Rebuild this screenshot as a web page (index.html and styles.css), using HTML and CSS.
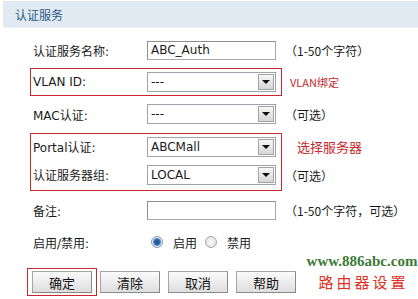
FILE: index.html
```html
<!DOCTYPE html>
<html>
<head>
<meta charset="utf-8">
<link rel="stylesheet" href="styles.css">
</head>
<body>
<div class="header">认证服务</div>
<div class="form">
  <div class="row">
    <div class="cell"><span class="label">认证服务名称:</span><span class="input">ABC_Auth</span></div>
    <span class="hint">（1-50个字符）</span>
  </div>
  <div class="row">
    <div class="cell boxed"><span class="label">VLAN ID:</span><span class="select">---<i class="arrow"></i></span></div>
    <span class="note note-vlan">VLAN绑定</span>
  </div>
  <div class="row">
    <div class="cell"><span class="label">MAC认证:</span><span class="select">---<i class="arrow"></i></span></div>
    <span class="hint">（可选）</span>
  </div>
  <div class="group">
    <div class="groupbox">
      <div class="grow g1"><span class="label">Portal认证:</span><span class="select">ABCMall<i class="arrow"></i></span></div>
      <div class="grow g2"><span class="label">认证服务器组:</span><span class="select">LOCAL<i class="arrow"></i></span></div>
    </div>
    <div class="ghints">
      <div class="grow g1"><span class="note note-srv">选择服务器</span></div>
      <div class="grow g2"><span class="hint">（可选）</span></div>
    </div>
  </div>
  <div class="row">
    <div class="cell"><span class="label">备注:</span><span class="input"></span></div>
    <span class="hint">（1-50个字符，可选）</span>
  </div>
  <div class="row">
    <div class="cell"><span class="label">启用/禁用:</span>
      <span class="radios"><i class="radio on"></i><span class="rtext">启用</span><i class="radio"></i><span class="rtext">禁用</span></span>
    </div>
  </div>
  <div class="buttons">
    <span class="btnbox"><span class="btn">确定</span></span>
    <span class="btn">清除</span>
    <span class="btn">取消</span>
    <span class="btn">帮助</span>
  </div>
</div>
<div class="mark">
  <div class="mark-url">www.886abc.com</div>
  <div class="mark-cn">路由器设置</div>
</div>
</body>
</html>
```
FILE: styles.css
```css
html, body {
  margin: 0;
  padding: 0;
  background: #fff;
}
body {
  width: 418px;
  height: 299px;
  overflow: hidden;
  position: relative;
  font-family: "DejaVu Sans", "Noto Sans CJK SC", sans-serif;
  font-size: 12px;
  color: #1a1a1a;
}
.header {
  margin: 1px 0 0 3px;
  height: 26px;
  line-height: 27px;
  background: #e1eaf2;
  border-bottom: 1px solid #ebf1f6;
  padding-left: 12px;
  color: #2b5a86;
  font-family: "Noto Sans CJK SC", sans-serif;
  font-size: 12px;
}
.form {
  padding-left: 30px;
  padding-top: 6px;
}
.row {
  display: flex;
  align-items: center;
  height: 32px;
}
.cell {
  display: flex;
  align-items: center;
  width: 252px;
  height: 28px;
  box-sizing: border-box;
  padding-left: 2px;
  border: 1px solid transparent;
}
.boxed {
  border-color: #c8282e;
}
.label {
  width: 114px;
  flex: none;
  white-space: nowrap;
}
.input, .select {
  position: relative;
  display: block;
  width: 129px;
  height: 19px;
  box-sizing: border-box;
  border: 1px solid #a9a9a9;
  border-top-color: #8f8f8f;
  border-left-color: #8f8f8f;
  background: #fff;
  padding-left: 3px;
  line-height: 17px;
  font-size: 12px;
}
.select {
  height: 20px;
  line-height: 18px;
  border-color: #9ea3aa;
}
.arrow {
  position: absolute;
  right: 1px;
  top: 1px;
  width: 16px;
  height: 16px;
  box-sizing: border-box;
  border: 1px solid #a3a3a3;
  background: linear-gradient(#f7f7f7, #d6d6d6);
}
.arrow::after {
  content: "";
  position: absolute;
  left: 3px;
  top: 5px;
  border-left: 4px solid transparent;
  border-right: 4px solid transparent;
  border-top: 4px solid #111;
}
.hint {
  margin-left: 3px;
  font-family: "Noto Sans CJK SC", sans-serif;
  white-space: nowrap;
}
.note {
  color: #c8282e;
  font-family: "Noto Sans CJK SC", sans-serif;
  white-space: nowrap;
}
.note-vlan {
  margin-left: 8px;
  font-size: 11px;
}
.note-srv {
  margin-left: 15px;
  font-size: 13px;
}
.group {
  display: flex;
  align-items: center;
  height: 64px;
}
.groupbox {
  width: 252px;
  box-sizing: border-box;
  border: 1px solid #c8282e;
  padding-left: 2px;
}
.grow {
  display: flex;
  align-items: center;
}
.g1 { height: 25px; }
.g2 { height: 31px; }
.ghints .g1 { height: 26px; }
.ghints .g2 { height: 32px; }
.radios {
  display: flex;
  align-items: center;
  padding-left: 4px;
}
.radio {
  display: block;
  width: 12px;
  height: 12px;
  box-sizing: border-box;
  border-radius: 50%;
  border: 1px solid #a8a8a8;
  background: radial-gradient(circle, #fdfdfd 0, #e4e4e4 70%, #cfcfcf 100%);
}
.radio.on {
  border-color: #8a98a8;
  background: radial-gradient(circle, #1d4d86 0, #2f68a8 2.5px, #5b8fc6 3.5px, #e8eef4 4.5px, #d4d9de 100%);
}
.rtext {
  margin-left: 10px;
  margin-right: 8px;
  font-family: "Noto Sans CJK SC", sans-serif;
}
.buttons {
  display: flex;
  align-items: center;
  margin-left: -3px;
  margin-top: 10px;
  gap: 8px;
}
.btnbox {
  display: flex;
  border: 1px solid #c8282e;
  padding: 2px 4px;
  margin-right: -5px;
}
.btn {
  display: block;
  width: 60px;
  height: 22px;
  box-sizing: border-box;
  border: 1px solid #a5a5a5;
  border-bottom-color: #8a8a8a;
  border-right-color: #8a8a8a;
  background: linear-gradient(#fafafa, #ececec 50%, #dedede);
  text-align: center;
  line-height: 21px;
  font-size: 13px;
  font-family: "Noto Sans CJK SC", sans-serif;
  color: #111;
}
.mark {
  position: absolute;
  left: 306px;
  top: 252px;
  width: 112px;
  text-align: center;
}
.mark-url {
  font-family: "Liberation Serif", serif;
  font-weight: bold;
  font-size: 15px;
  line-height: 19px;
  color: #3c7a35;
}
.mark-cn {
  font-family: "Noto Sans CJK SC", sans-serif;
  font-weight: 400;
  font-size: 15px;
  line-height: 22px;
  letter-spacing: 3px;
  padding-left: 3px;
  color: #e0301f;
}
```
